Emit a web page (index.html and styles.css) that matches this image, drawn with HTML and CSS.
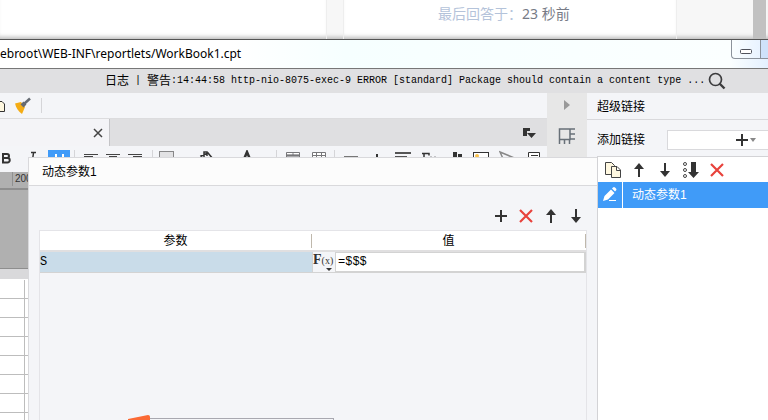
FILE: index.html
```
<!DOCTYPE html>
<html lang="zh-CN">
<head>
    <meta charset="UTF-8">
    <meta name="viewport" content="width=device-width, initial-scale=1.0">
    <title>WorkBook1.cpt</title>
    <link rel="stylesheet" href="styles.css">
</head>
<body>
    <!-- 公用图标 -->
    <svg class="defs" width="0" height="0">
        <symbol id="plus" viewBox="0 0 16 16"><path d="M2 8h12M8 2v12" stroke="#333" stroke-width="2"/></symbol>
        <symbol id="cross" viewBox="0 0 16 16"><path d="M2 2l12 12M14 2L2 14" stroke="#e8423c" stroke-width="2.2"/></symbol>
        <symbol id="up" viewBox="0 0 16 16"><path d="M8 15V4" stroke="#333" stroke-width="2"/><path d="M8 1l5 6H3z" fill="#333"/></symbol>
        <symbol id="down" viewBox="0 0 16 16"><path d="M8 1v11" stroke="#333" stroke-width="2"/><path d="M8 15l5-6H3z" fill="#333"/></symbol>
    </svg>

    <!-- 后面的论坛页面 -->
    <div class="forum">
        <div class="forum-side"></div>
        <div class="forum-card"><span class="forum-label">最后回答于：</span>23 秒前</div>
        <div class="forum-scroll"></div>
    </div>

    <div class="window">
        <div class="titlebar">
            <span class="path">ebroot\WEB-INF\reportlets/WorkBook1.cpt</span>
            <div class="win-buttons">
                <button class="win-button" aria-label="最小化"><svg width="12" height="5"><rect x="0.5" y="0.5" width="11" height="4" rx="1" fill="#fff" stroke="#50535c"/></svg></button>
                <button class="win-button win-max" aria-label="最大化"><svg width="11" height="10"><rect x="1" y="1" width="9" height="8" fill="#fff" stroke="#50535c" stroke-width="2"/></svg></button>
            </div>
        </div>

        <div class="logbar">
            <span>日志</span><span class="mono">&nbsp;|&nbsp;</span><span>警告</span><span class="mono">:14:44:58 http-nio-8075-exec-9 ERROR [standard] Package should contain a content type ...</span>
            <button class="icon-button search" aria-label="搜索"><svg width="18" height="18" fill="none" stroke="#3c3c3e"><circle cx="7.500" cy="7.500" r="6" stroke-width="1.700"/><path d="M11.500 11.500l5 5" stroke-width="2.400"/></svg></button>
        </div>

        <div class="workspace">
            <div class="editor">
                <div class="quickbar">
                    <svg width="5" height="14"><path d="M0 2.500h2l2.500 2.500v7.500H0" fill="#fff8e0" stroke="#333"/></svg>
                    <svg width="18" height="18"><path d="M1 6.500l6-1.500 4 5-3 7C4 14 2 11 1 6.500z" fill="#f4ac14"/><path d="M8 6l3 3" stroke="#666b73" stroke-width="4"/><path d="M10 7l6-5.500" stroke="#666b73" stroke-width="2.500"/></svg>
                    <span class="quick-sep"></span>
                </div>

                <div class="tabs">
                    <div class="tab">
                        <button class="icon-button" aria-label="关闭"><svg width="10" height="10"><path d="M1 1l8 8M9 1L1 9" stroke="#444" stroke-width="1.500"/></svg></button>
                    </div>
                    <button class="icon-button tab-list" aria-label="标签列表"><svg width="13" height="10" fill="#333"><path d="M0 0h7v3H4v5H0zM4 5h9L8.500 10z"/></svg></button>
                </div>

                <div class="formatbar">
                    <div class="group group-font">
                        <svg width="16" height="16"><path d="M3 3.500v9M2 4h5a2 2 0 0 1 0 4H3h4.500a2.200 2.200 0 0 1 0 4.500H2" fill="none" stroke="#333" stroke-width="2"/></svg>
                        <svg width="16" height="16"><path d="M7 2.500h5M9.500 3L8 13M5 13h5" stroke="#333" stroke-width="1.500"/></svg>
                        <span class="underline"><svg width="16" height="16"><path d="M5 4v5a3.500 3.500 0 0 0 7 0V4" fill="none" stroke="#fff" stroke-width="2"/></svg></span>
                    </div>
                    <div class="group group-align">
                        <svg width="16" height="16"><path d="M1 4.500h14M1 6.500h9M1 10.500h14" stroke="#444"/></svg>
                        <svg width="16" height="16"><path d="M1 4.500h14M4 6.500h8M1 10.500h14" stroke="#444"/></svg>
                        <svg width="16" height="16"><path d="M1 4.500h14M6 6.500h9M1 10.500h14" stroke="#444"/></svg>
                    </div>
                    <div class="group group-cell">
                        <svg width="16" height="16"><rect x="0.500" y="1.500" width="14" height="13" fill="#e2e2e4" stroke="#222" stroke-dasharray="1 1"/></svg>
                        <svg width="16" height="16"><path d="M5 8V2h3v4M2 6l7-3 5 6-6 5z" fill="none" stroke="#333" stroke-width="1.500"/></svg>
                        <svg width="16" height="16"><path d="M3 14L8 2l5 12M5 10h6" fill="none" stroke="#333" stroke-width="2.500"/></svg>
                    </div>
                    <div class="group group-merge">
                        <svg width="16" height="16"><path d="M1.500 2.500h13v12h-13zM8 2v3M1 5.500h14" fill="#a9a9ac" stroke="#77777a"/><path d="M2 3.500h5.500M8.500 3.500H14" stroke="#fff"/></svg>
                        <svg width="16" height="16"><path d="M1.500 2.500h13v12h-13zM5.500 2v12M10.500 2v12M1 5.500h14" fill="#fff" stroke="#77777a"/></svg>
                    </div>
                    <div class="group">
                        <svg width="16" height="16"><path d="M1 6.500h14" stroke="#777"/></svg>
                        <svg width="16" height="16"><path d="M8 4v10M3 9h10" stroke="#333" stroke-width="2"/></svg>
                        <svg width="16" height="16"><path d="M0 3h16" stroke="#555" stroke-width="2"/><path d="M0 6.500h12" stroke="#555"/></svg>
                        <svg width="16" height="16"><path d="M1 3.500h7v2M3 3v10M3 8h4M9 7.500h2M13 7.500h2" fill="none" stroke="#333" stroke-width="1.500"/></svg>
                        <svg width="16" height="16" fill="#333"><path d="M6 2h4v12H6zM11 4h4v10h-4zM1 7h4v7H1z"/></svg>
                        <svg width="16" height="16"><rect x="0.500" y="2.500" width="15" height="11" fill="#fff" stroke="#333"/><circle cx="4" cy="6" r="2" fill="#f8c04a"/></svg>
                        <svg width="16" height="16"><path d="M1 2l12 5-5 1-2 5z" fill="none" stroke="#888" stroke-width="1.500"/></svg>
                        <svg width="16" height="16"><path d="M3.500 2.500h11v12h-11zM6 5.500h7M6 7.500h7" fill="#fff" stroke="#333"/></svg>
                    </div>
                </div>

                <div class="ruler"><span class="ruler-number">200</span></div>
                <div class="canvas"></div>
                <div class="sheet-head"></div>
                <div class="sheet">
                    <div class="cells"></div><div class="cells"></div><div class="cells"></div><div class="cells"></div>
                    <div class="cells"></div><div class="cells"></div><div class="cells"></div><div class="cells"></div>
                </div>
            </div>

            <div class="rail">
                <button class="icon-button" aria-label="收起"><svg width="6" height="10"><path d="M0 0l6 5-6 5z" fill="#999"/></svg></button>
                <button class="icon-button" aria-label="单元格属性"><svg width="18" height="18" fill="none" stroke="#687078" stroke-width="1.500"><path d="M1.500 17V2H17M1 12.500h11V2M6.500 17v-4M11.500 17v-5M12 7h5M12 12h5"/></svg></button>
            </div>

            <div class="properties">
                <h2 class="props-title">超级链接</h2>
                <div class="add-row">
                    <label for="addLink">添加链接</label>
                    <button class="add-link" id="addLink" aria-label="添加链接">
                        <svg width="16" height="16"><use href="#plus"/></svg><svg width="6" height="4"><path d="M0 0h6L3 4z" fill="#888"/></svg>
                    </button>
                </div>
                <div class="link-list">
                    <div class="list-tools">
                        <button class="icon-button" aria-label="复制"><svg width="16" height="16" fill="#fff8e0" stroke="#444"><path d="M0.500 0.500h6l3 3v9h-9z"/><path d="M6.500 4.500h5.500l3.500 3.500v7.500h-9zM11.500 4.500v4h4"/></svg></button>
                        <button class="icon-button" aria-label="上移"><svg width="16" height="16"><use href="#up"/></svg></button>
                        <button class="icon-button" aria-label="下移"><svg width="16" height="16"><use href="#down"/></svg></button>
                        <button class="icon-button" aria-label="排序"><svg width="16" height="16"><g fill="none" stroke="#444"><circle cx="2" cy="2" r="1.500"/><circle cx="2" cy="8" r="1.500"/><circle cx="2" cy="14" r="1.500"/></g><path d="M8 0h5v10h3l-5.500 6L5 10h3z" fill="#333"/></svg></button>
                        <button class="icon-button" aria-label="删除"><svg width="16" height="16"><use href="#cross"/></svg></button>
                    </div>
                    <div class="list-item">
                        <button class="icon-button edit" aria-label="编辑"><svg width="16" height="16" fill="#fff"><path d="M1 14l1.500-5L9 2.500l3.500 3.500L6 12.500zM10 1.500l1-1a1.500 1.500 0 0 1 2 0l1 1a1.500 1.500 0 0 1 0 2l-1 1zM7 13h7v1H7z"/></svg></button>
                        <span class="list-name">动态参数1</span>
                    </div>
                </div>
            </div>
        </div>

        <!-- 参数对话框 -->
        <div class="dialog" role="dialog" aria-labelledby="dialogTitle">
            <h2 class="dialog-title" id="dialogTitle">动态参数1</h2>
            <div class="dialog-tools">
                <button class="icon-button" aria-label="添加"><svg width="16" height="16"><use href="#plus"/></svg></button>
                <button class="icon-button" aria-label="删除"><svg width="16" height="16"><use href="#cross"/></svg></button>
                <button class="icon-button" aria-label="上移"><svg width="16" height="16"><use href="#up"/></svg></button>
                <button class="icon-button" aria-label="下移"><svg width="16" height="16"><use href="#down"/></svg></button>
            </div>
            <div class="table-box">
                <table class="params">
                    <thead>
                        <tr><th class="name-head"><span>参数</span></th><th><span>值</span></th></tr>
                    </thead>
                    <tbody>
                        <tr>
                            <td class="name">S</td>
                            <td class="value">
                                <div class="value-editor">
                                    <button class="fx" aria-label="公式类型"><b>F</b><small>(x)</small><svg class="fx-arrow" width="6" height="3"><path d="M0 0h6L3 3z" fill="#333"/></svg></button>
                                    <input class="value-input" type="text" value="=$$$" aria-label="值">
                                </div>
                            </td>
                        </tr>
                    </tbody>
                </table>
            </div>
        </div>

        <!-- 输入法浮条 -->
        <div class="ime">
            <svg class="ime-logo" width="24" height="5"><path d="M0 5V4L20 0q2 0 2 2v3z" fill="#fb6a35"/></svg>
            <div class="ime-box"></div>
        </div>
    </div>
</body>
</html>
```
FILE: styles.css
```
* {
    box-sizing: border-box;
}

body {
    margin: 0;
    height: 100vh;
    display: flex;
    flex-direction: column;
    overflow: hidden;
    background-color: #f7f7f7;
    color: #000;
    font-family: "Liberation Sans", "Noto Sans CJK SC", sans-serif;
    font-size: 12px;
    line-height: 16px;
}

svg {
    display: block;
    flex: none;
}

h2 {
    margin: 0;
    font-size: 12px;
    font-weight: normal;
}

button {
    font: inherit;
    color: inherit;
}

.defs {
    position: absolute;
}

.mono {
    font-family: "Liberation Mono", monospace;
    font-size: 10px;
    white-space: pre;
}

.icon-button {
    display: flex;
    flex: none;
    padding: 0;
    border: none;
    background: none;
}

/* 论坛背景 */
.forum {
    display: flex;
    flex: none;
    gap: 16px;
    height: 39px;
    padding-right: 2px;
}

.forum-side {
    width: 327px;
    background-color: #fff;
    border-right: 1px solid #eee;
}

.forum-card {
    width: 334px;
    padding: 4px 0 0 94px;
    border: solid #eee;
    border-width: 0 1px;
    background-color: #fff;
    color: #777b86;
    font-family: "Noto Sans", "Noto Sans CJK SC", sans-serif;
    font-size: 14px;
    line-height: 20px;
    white-space: nowrap;
}

.forum, .forum-side, .forum-card {
    box-shadow: inset 0 -5px 4px -3px #bbb;
}

.forum-label {
    color: #b4c3da;
}

.forum-scroll {
    width: 13px;
    margin-left: auto;
    background-color: #c1c1c1;
}

/* 设计器窗口 */
.window {
    position: relative;
    display: flex;
    flex-direction: column;
    flex: 1;
    min-height: 0;
    border-top: 1px solid #555;
    background-color: #f4f5f8;
}

.titlebar {
    display: flex;
    flex: none;
    justify-content: space-between;
    height: 29px;
    border-bottom: 1px solid #777;
    background: linear-gradient(90deg, #fff 30%, #f6ffff 45%, #fbffff 95%, #e4f0ff);
}

.path {
    font-family: "Noto Sans", sans-serif;
    font-size: 12px;
    line-height: 28px;
}

.win-buttons {
    display: flex;
    width: 37px;
    height: 19px;
    overflow: hidden;
    border: solid #8b929b;
    border-width: 0 0 1px 1px;
    border-radius: 0 0 0 4px;
}

.win-button {
    display: flex;
    flex: none;
    align-items: center;
    justify-content: center;
    width: 28px;
    padding: 4px 0 0;
    border: none;
    background: none;
}

.win-max {
    border-left: 1px solid #8b929b;
    background-color: #cfe2fa;
}

.logbar {
    display: flex;
    flex: none;
    align-items: center;
    height: 24px;
    padding-left: 105px;
    background-color: #e0e0e2;
    white-space: nowrap;
}

.search {
    margin-left: 3px;
}

.workspace {
    display: grid;
    grid-template-columns: 1fr 40px 181px;
    flex: 1;
    min-height: 0;
}

/* 报表编辑区 */
.editor {
    display: flex;
    flex-direction: column;
    min-width: 0;
    overflow: hidden;
}

.quickbar {
    display: flex;
    flex: none;
    align-items: center;
    gap: 9px;
    height: 25px;
}

.quick-sep {
    width: 1px;
    height: 15px;
    background-color: #d5d5d8;
}

.tabs {
    display: flex;
    flex: none;
    align-items: center;
    justify-content: space-between;
    height: 28px;
    padding-right: 11px;
    border-top: 1px solid #dcdcde;
    background-color: #dfdfe1;
}

.tab {
    display: flex;
    align-items: center;
    justify-content: flex-end;
    width: 110px;
    height: 100%;
    padding-right: 6px;
    border-right: 1px solid #c4c4c7;
    background-color: #f4f4f7;
}

.formatbar {
    display: flex;
    flex: none;
    height: 26px;
    padding-top: 4px;
}

.group {
    display: flex;
    flex: none;
    gap: 10px;
    height: 18px;
    padding-left: 8px;
    border-left: 1px solid #d5d5d8;
}

.group-font {
    gap: 8px;
    width: 74px;
    padding-left: 0;
    border-left: none;
}

.group-align {
    gap: 6px;
    width: 78px;
}

.group-cell {
    gap: 24px;
    width: 124px;
    padding-left: 6px;
}

.group-merge {
    width: 58px;
}

.underline {
    display: flex;
    justify-content: center;
    width: 22px;
    background-color: #409bf8;
}

.ruler {
    flex: none;
    height: 18px;
    padding-left: 12px;
    border-bottom: 2px solid #8e8e8e;
    background-color: #b0b0b0;
}

.ruler-number {
    display: block;
    padding-left: 2px;
    border-left: 1px solid #909090;
    color: #333;
    font-size: 10px;
    line-height: 14px;
}

.canvas {
    flex: none;
    height: 79px;
    border-bottom: 1px solid #8e8e8e;
    background-color: #b0b0b0;
}

.sheet-head {
    flex: none;
    height: 10px;
    background-color: #d9d9db;
}

.sheet {
    flex: 1;
    padding-top: 1px;
    background-color: #fff;
}

.cells {
    height: 19px;
    border-bottom: 1px solid #bdbdbd;
}

.cells::before {
    content: "";
    display: block;
    width: 24px;
    height: 19px;
    border-right: 1px solid #bdbdbd;
}

.rail {
    display: flex;
    flex-direction: column;
    align-items: center;
    gap: 17px;
    padding-top: 7px;
    background-color: #e7e7e7;
}

/* 右侧属性面板 */
.properties {
    display: flex;
    flex-direction: column;
    background-color: #f4f5f8;
}

.props-title {
    flex: none;
    height: 27px;
    padding-left: 10px;
    border-bottom: 1px solid #d9d9dc;
    line-height: 28px;
}

.add-row {
    display: flex;
    flex: none;
    align-items: center;
    gap: 22px;
    height: 36px;
    padding: 4px 0 0 10px;
}

.add-link {
    display: flex;
    flex: 1;
    align-items: center;
    justify-content: flex-end;
    height: 20px;
    padding: 0 12px 0 0;
    border: 1px solid #d9d9dc;
    border-right: none;
    background-color: #fff;
}

.link-list {
    position: relative;
    z-index: 2;
    flex: 1;
    margin-left: 10px;
    border: solid #d3d3d6;
    border-width: 1px 0 0 1px;
    background-color: #fff;
}

.list-tools {
    display: flex;
    align-items: center;
    gap: 10px;
    height: 25px;
    padding-left: 7px;
}

.list-item {
    display: flex;
    height: 26px;
    background-color: #409bf8;
    color: #fff;
    line-height: 26px;
}

.edit {
    align-items: center;
    justify-content: center;
    width: 25px;
    border-right: 1px solid #fff;
}

.list-name {
    padding-left: 9px;
}

/* 对话框 */
.dialog {
    position: absolute;
    top: 117px;
    right: 171px;
    bottom: 0;
    left: 28px;
    display: flex;
    flex-direction: column;
    border: solid #d9d9dc;
    border-width: 1px 0 0 1px;
    background-color: #f4f5f8;
}

.dialog-title {
    height: 28px;
    padding-left: 13px;
    border-bottom: 1px solid #d9d9dc;
    background-color: #fcfcfc;
    line-height: 28px;
}

.dialog-tools {
    display: flex;
    justify-content: flex-end;
    gap: 9px;
    padding: 22px 13px 6px;
}

.table-box {
    flex: 1;
    margin: 0 10px;
    border: 1px solid #e4e4e8;
    border-bottom: none;
}

.params {
    width: 100%;
    border-collapse: collapse;
    table-layout: fixed;
}

.params th {
    height: 20px;
    padding: 0;
    border-bottom: 2px solid #e0dfe0;
    background-color: #fff;
    font-weight: normal;
}

.params .name-head {
    width: 272px;
}

.params th span {
    display: block;
    border-right: 1px solid #bfb8ac;
    line-height: 14px;
}

.params td {
    height: 21px;
    padding: 0;
    border-bottom: 1px solid #d3d3d3;
}

.name, .value-input {
    font-family: "Liberation Mono", monospace;
    font-size: 12px;
}

.name {
    background-color: #c9dce9;
}

.value-editor {
    display: flex;
    height: 20px;
}

.fx {
    position: relative;
    flex: none;
    width: 23px;
    padding: 0 0 4px;
    border: none;
    border-left: 1px solid #d3d3d3;
    background-color: #f4f5f8;
    color: #333;
    font-family: "Liberation Serif", serif;
    font-size: 14px;
    line-height: 14px;
    text-align: left;
    white-space: nowrap;
}

.fx small {
    font-size: 10px;
}

.fx-arrow {
    position: absolute;
    right: 3px;
    bottom: 1px;
}

.value-input {
    flex: 1;
    min-width: 0;
    padding: 0 2px;
    border: 1px solid #d3d3d3;
    border-right-width: 2px;
    background-color: #fff;
}

/* 输入法 */
.ime {
    position: absolute;
    bottom: 0;
    left: 128px;
    width: 206px;
    height: 5px;
}

.ime-box {
    height: 2px;
    margin: 3px 0 0 22px;
    border: solid #a8a8b0;
    border-width: 1px 1px 0 0;
}

.ime-logo {
    position: absolute;
    top: 0;
    left: 0;
}
```
